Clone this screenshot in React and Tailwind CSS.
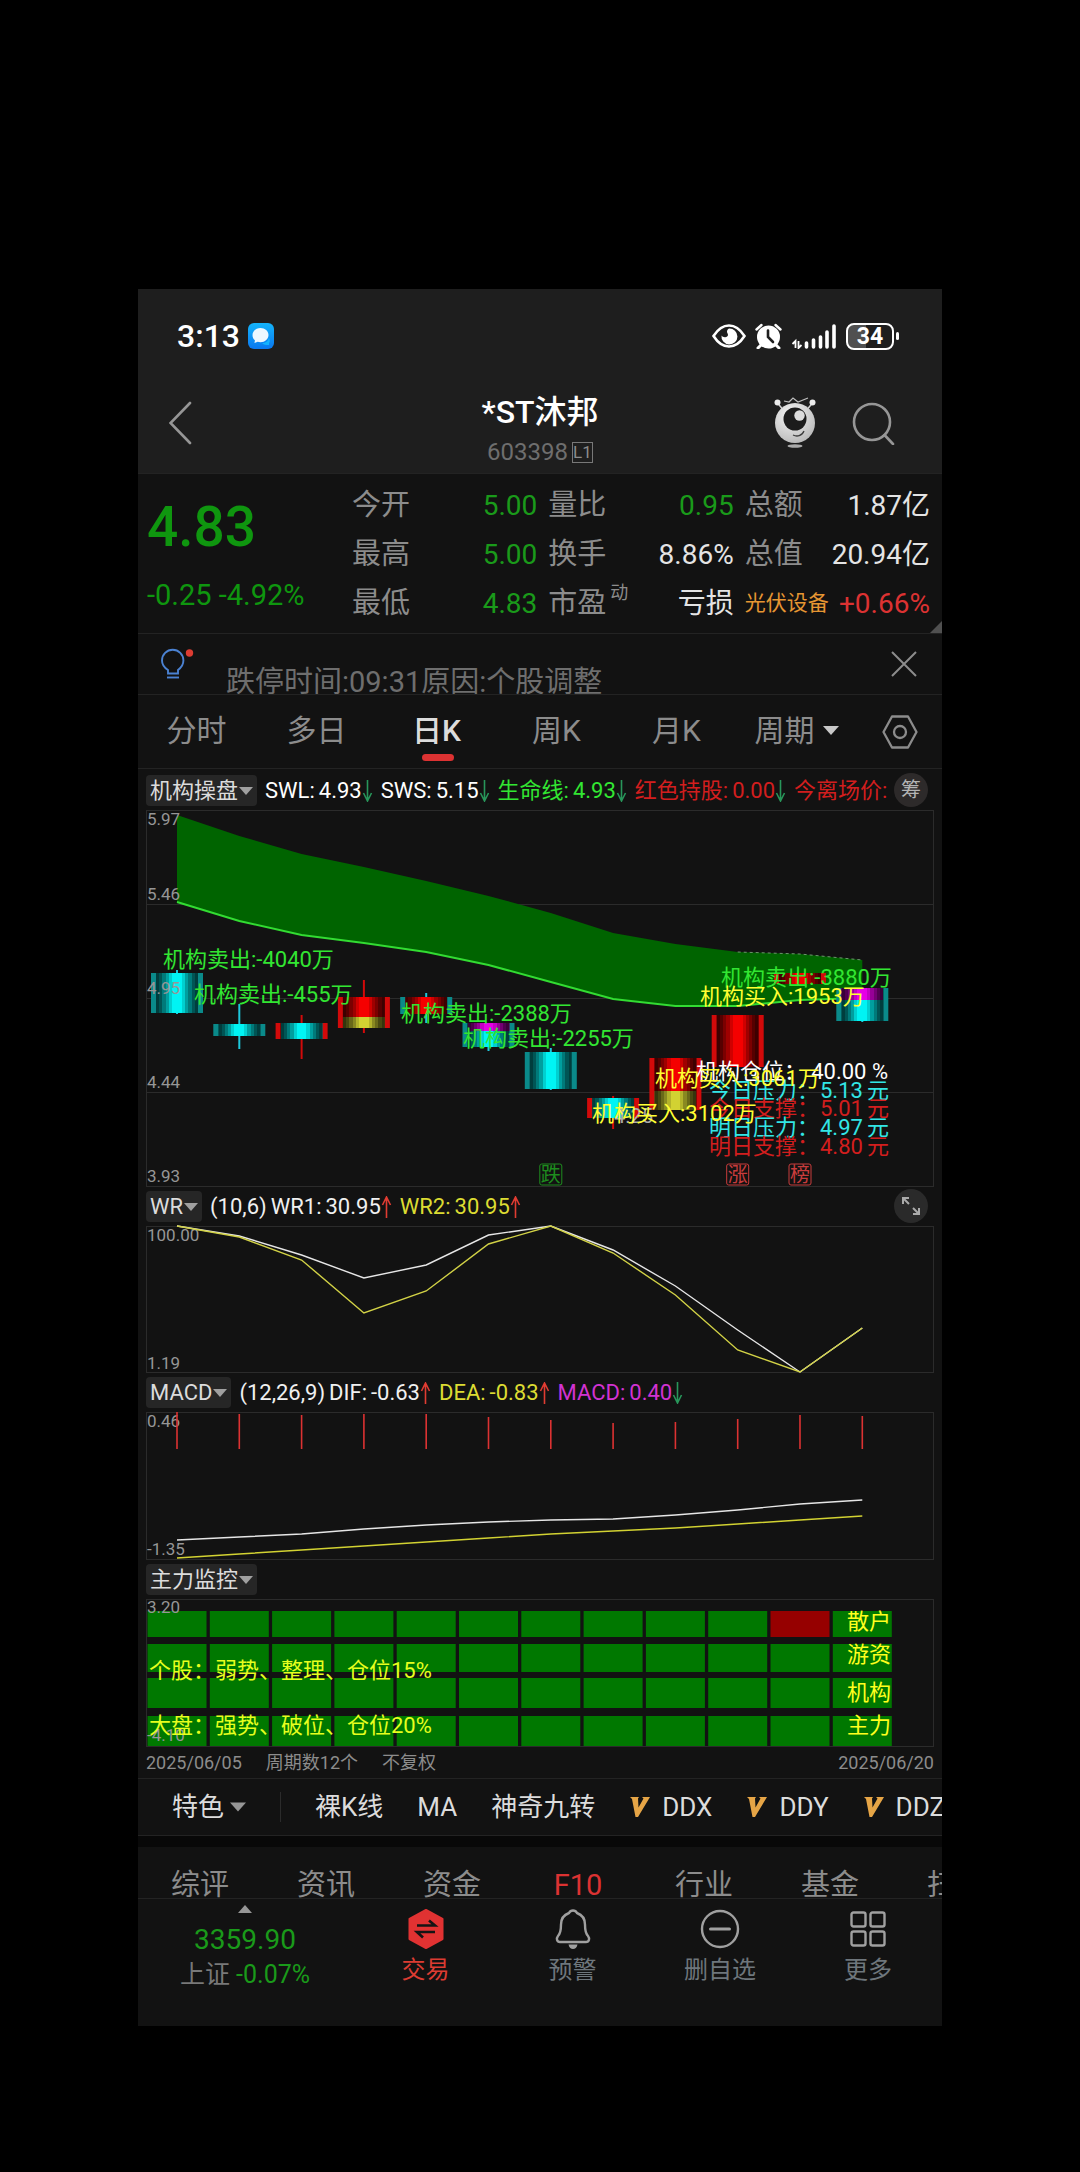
const START = 31;
const STEP = 62.3;
const cx = (i) => START + STEP * i;
const toPoints = (ys) => ys.map((y, i) => `${cx(i)},${y}`).join(' ');

const CYAN = '#00f4f4';
const RED = '#f50000';
const YELLOW = '#d2d232';
const MAGENTA = '#e600e6';
const TEAL = '#0a8a8a';
const DARK_RED = '#d20a0a';

const quoteRows = [
  [
    { label: '今开', value: '5.00', color: 'text-[#1a9a1a]' },
    { label: '量比', value: '0.95', color: 'text-[#1a9a1a]' },
    { label: '总额', value: '1.87亿', color: 'text-[#e4e4e4]' },
  ],
  [
    { label: '最高', value: '5.00', color: 'text-[#1a9a1a]' },
    { label: '换手', value: '8.86%', color: 'text-[#e4e4e4]' },
    { label: '总值', value: '20.94亿', color: 'text-[#e4e4e4]' },
  ],
  [
    { label: '最低', value: '4.83', color: 'text-[#1a9a1a]' },
    { label: '市盈', sup: '动', value: '亏损', color: 'text-[#e4e4e4]' },
    { label: '光伏设备', sector: true, value: '+0.66%', color: 'text-[#dc3232]' },
  ],
];

const bandTop = [5, 26, 44, 57, 71, 86, 103, 123, 134, 142, 144, 150];
const bandBottom = [92, 111, 125, 133, 142, 155, 172, 189, 196, 196, 190, 188];

const candles = [
  { side: TEAL, wick: [160, 204], parts: [[163, 203, CYAN]] },
  { side: TEAL, wick: [194, 239], parts: [[214, 226, CYAN]] },
  { side: DARK_RED, wick: [205, 249], parts: [[213, 229, CYAN]] },
  { side: DARK_RED, wick: [170, 223], parts: [[187, 207, RED], [207, 218, YELLOW]] },
  { side: TEAL, wick: [183, 213], parts: [[187, 204, RED]] },
  { side: TEAL, wick: [213, 241], parts: [[213, 221, MAGENTA], [221, 237, CYAN]] },
  { side: TEAL, wick: [238, 280], parts: [[242, 279, CYAN]] },
  { side: DARK_RED, wick: [286, 319], parts: [[288, 308, CYAN]] },
  { side: DARK_RED, wick: [248, 300], parts: [[248, 281, RED], [281, 300, YELLOW]] },
  { side: DARK_RED, wick: [205, 257], parts: [[205, 257, RED]] },
  { side: DARK_RED, wick: [163, 174], parts: [[163, 174, RED]] },
  { side: TEAL, wick: [178, 212], parts: [[178, 190, MAGENTA], [190, 211, CYAN]] },
];

// brightness of the vertical stripes in a candle body, left to right
const shades = [0.25, 0.35, 0.5, 0.65, 0.85, 1, 1, 1, 0.85, 0.65, 0.5, 0.35, 0.25];

const flows = [
  { x: 17, y: 157, text: '机构卖出:-4040万', color: '#32e632' },
  { x: 48, y: 192, text: '机构卖出:-455万', color: '#32e632' },
  { x: 255, y: 211, text: '机构卖出:-2388万', color: '#32e632' },
  { x: 317, y: 236, text: '机构卖出:-2255万', color: '#32e632' },
  { x: 575, y: 175, text: '机构卖出:-3880万', color: '#32e632' },
  { x: 554, y: 194, text: '机构买入:1953万', color: '#ffff32' },
];

const levels = [
  { y: 288, label: '今日压力：', value: '5.13', color: '#32e6e6' },
  { y: 306, label: '今日支撑：', value: '5.01', color: '#d21e1e' },
  { y: 325, label: '明日压力：', value: '4.97', color: '#32e6e6' },
  { y: 344, label: '明日支撑：', value: '4.80', color: '#d21e1e' },
];

const marks = [
  { i: 6, text: '跌', color: '#1e8c1e' },
  { i: 9, text: '涨', color: '#c83c3c' },
  { i: 10, text: '榜', color: '#c83c3c' },
];

const wr1 = [0, 10, 29, 52, 39, 9, 0, 24, 60, 104, 146, 102];
const wr2 = [0, 11, 34, 87, 65, 18, 0, 27, 69, 124, 146, 102];

const macdBars = [0, 2, 3, 2, 2, 5, 8, 11, 10, 7, 3, 4];
const dif = [128, 125, 122, 117, 113, 110, 108, 107, 103, 98, 92, 88];
const dea = [146, 142, 138, 134, 130, 126, 122, 119, 116, 112, 108, 104];

const monitorRows = [
  { y: 12, h: 26, label: '散户', base: 30 },
  { y: 45, h: 28, label: '游资', base: 63 },
  { y: 79, h: 30, label: '机构', base: 101 },
  { y: 117, h: 30, label: '主力', base: 134 },
];

function Caret({ className = '' }) {
  return (
    <svg viewBox="0 0 16 9" className={className}>
      <path d="M0 0h16L8 9z" fill="currentColor" />
    </svg>
  );
}

function Trend({ up }) {
  return (
    <svg
      viewBox="0 0 11 22"
      className={`h-[22px] w-[11px] shrink-0 ${up ? 'text-[#e03c32]' : 'rotate-180 text-[#28965a]'}`}
      fill="none"
      stroke="currentColor"
      strokeWidth="1.6"
    >
      <path d="M5.5 22V1M1.5 9L5.5 1l4 8" />
    </svg>
  );
}

function IndicatorRow({ name, children }) {
  return (
    <div className="flex h-[39px] items-center gap-2 text-[22px] leading-none whitespace-nowrap">
      <button className="flex h-[31px] shrink-0 items-center gap-px rounded-sm bg-[#262626] px-1 text-[#dcdcdc]">
        {name}
        <Caret className="h-2 w-[14px] text-[#a0a0a0]" />
      </button>
      {children}
    </div>
  );
}

function Reading({ label, value, up, color = 'text-[#f0f0f0]' }) {
  return (
    <span className={`flex items-center ${color}`}>
      {label}:<span className="ml-1">{value}</span>
      <Trend up={up} />
    </span>
  );
}

function Frame({ height }) {
  return <rect x="0.5" y="0.5" width="787" height={height - 1} fill="none" stroke="#2b2b2b" />;
}

function StatusBar() {
  return (
    <div className="flex h-[94px] items-center pl-[39px] pr-[43px] text-white">
      <span className="text-[32px] font-medium leading-none">3:13</span>
      <svg viewBox="0 0 26 26" className="ml-2 size-[26px]">
        <defs>
          <linearGradient id="chat" x1="0" y1="0" x2="0" y2="1">
            <stop offset="0" stopColor="#14b4fa" />
            <stop offset="1" stopColor="#0a78f0" />
          </linearGradient>
        </defs>
        <rect width="26" height="26" rx="6" fill="url(#chat)" />
        <path d="M14 20c4 0 6-2 7-5 1 2 1 4 0 5v2c-3 0-5 0-7-2z" fill="#14b4ff" />
        <path d="M12.500 5c4.500 0 8 3 8 7s-3.500 7.200-8 7.200c-1 0-2-.1-2.800-.4L6.500 20l.4-2.800C5.200 16 4.500 14 4.500 12c0-4 3.500-7 8-7z" fill="#eef8ff" />
      </svg>
      <div className="ml-auto flex items-center gap-[9px]">
        <svg viewBox="0 0 34 24" className="h-6 w-[34px]" fill="none">
          <path d="M1.500 12C6 5 11 1.500 17 1.500S28 5 32.500 12C28 19 23 22.500 17 22.500S6 19 1.500 12z" stroke="#fff" strokeWidth="2.600" />
          <path d="M17 4.500a8 8 0 1 1-7.500 7c1 1.500 3 2 4.500 1.500 2.500-.8 2.300-2.500 1.300-4-.8-1.700 0-3.600 1.700-4.500z" fill="#fff" />
        </svg>
        <svg viewBox="0 0 27 26" className="h-[26px] w-[27px]" fill="none">
          <circle cx="13.500" cy="14" r="11.500" fill="#fff" />
          <path d="M1.500 6.500l5-4.500M25.500 6.500l-5-4.500" stroke="#fff" strokeWidth="2.400" strokeLinecap="round" />
          <path d="M6 22l-3 3M21 22l3 3" stroke="#fff" strokeWidth="3" strokeLinecap="round" />
          <path d="M13 7.500V14l5 5" stroke="#1e1e1e" strokeWidth="2.600" strokeLinecap="round" />
        </svg>
        <svg viewBox="0 0 46 26" className="h-[26px] w-[46px]" stroke="#fff" fill="none">
          <path d="M4.500 25v-7l-3 3M7.500 18v7l3-3" strokeWidth="1.800" />
          <path d="M15.500 20v4M22.500 17v7M29.500 14v10M36 9v15M43 3v21" strokeWidth="3.600" strokeLinecap="round" />
        </svg>
        <div className="flex items-center gap-[2px]">
          <span className="flex h-[27px] w-12 items-center justify-center rounded-lg border-2 border-white bg-linear-to-r from-[#505050] from-40% to-transparent to-40% text-[23px] font-bold leading-none">
            34
          </span>
          <span className="h-2 w-[3px] rounded-full bg-white" />
        </div>
      </div>
    </div>
  );
}

function TitleBar() {
  return (
    <div className="grid h-[90px] grid-cols-3 items-start pl-[31px] pr-[47px]">
      <button aria-label="返回" className="mt-[18px] w-6 text-[#969696]">
        <svg viewBox="0 0 24 44" className="h-11 w-6" fill="none" stroke="currentColor" strokeWidth="2.600" strokeLinecap="round">
          <path d="M21 2L1.500 22 21 42" />
        </svg>
      </button>
      <div className="flex flex-col items-center gap-1 pt-[11px] pl-4 whitespace-nowrap">
        <h1 className="text-[32px] font-medium leading-9 text-white">*ST沐邦</h1>
        <div className="flex items-center gap-1 text-2xl leading-9 text-[#6e6e6e]">
          603398
          <span className="flex h-[21px] w-[21px] items-center justify-center border border-[#787878] text-[17px] leading-none text-[#8c8c8c]">L1</span>
        </div>
      </div>
      <div className="flex items-center justify-end gap-9 pt-[14px]">
        <button aria-label="助手">
          <svg viewBox="0 0 42 52" className="h-[52px] w-[42px]" fill="none">
            <defs>
              <radialGradient id="ball" cx="0.4" cy="0.3" r="0.8">
                <stop offset="0" stopColor="#f5f5f5" />
                <stop offset="1" stopColor="#b4b4b4" />
              </radialGradient>
            </defs>
            <path d="M10 4l5 1 4-4 5 4 10-4" stroke="#bebebe" strokeWidth="1.200" />
            <path d="M3.500 6l5 6M38.500 6l-5 6" stroke="#d2d2d2" strokeWidth="1.500" />
            <circle cx="3.500" cy="5.500" r="3" fill="#ebebeb" />
            <circle cx="38.500" cy="5.500" r="3" fill="#ebebeb" />
            <circle cx="21" cy="26" r="20" fill="url(#ball)" />
            <circle cx="21" cy="22" r="11.500" fill="#1c1c1c" />
            <circle cx="25.500" cy="18.500" r="5.200" fill="#dcdcdc" />
            <path d="M19 38c4 2 9 1 11-4" stroke="#3c3c3c" strokeWidth="1.300" />
            <ellipse cx="21" cy="49" rx="7.500" ry="1.800" fill="#aaa" />
          </svg>
        </button>
        <button aria-label="搜索" className="text-[#969696]">
          <svg viewBox="0 0 43 43" className="size-[43px]" fill="none" stroke="currentColor" strokeWidth="2.600" strokeLinecap="round">
            <circle cx="20" cy="20" r="18" />
            <path d="M32.500 33L41 42" />
          </svg>
        </button>
      </div>
    </div>
  );
}

function Quote() {
  return (
    <section className="relative flex h-[161px] border-y border-[#232323] pl-[9px] pr-3">
      <div className="flex w-[205px] shrink-0 flex-col pt-[23px] text-[#0f960f]">
        <strong className="text-[55px] font-medium leading-[60px]">4.83</strong>
        <span className="pt-[18px] text-[29px] leading-10">-0.25 -4.92%</span>
      </div>
      <div className="flex flex-1 flex-col pt-[7px]">
        {quoteRows.map((row, i) => (
          <div key={i} className="grid h-[49px] grid-cols-3 gap-[11px] text-[28px] leading-[49px]">
            {row.map((cell) => (
              <div key={cell.label} className="flex justify-between whitespace-nowrap">
                {cell.sector ? (
                  <a href="#sector" className="text-[21px] text-[#e69632]">{cell.label}</a>
                ) : (
                  <span className="flex text-[29px] text-[#8c8c8c]">
                    {cell.label}
                    {cell.sup && <sup className="top-0 ml-1 text-lg leading-7">{cell.sup}</sup>}
                  </span>
                )}
                <span className={cell.color}>{cell.value}</span>
              </div>
            ))}
          </div>
        ))}
      </div>
      <svg viewBox="0 0 12 12" className="absolute right-0 bottom-0 size-3">
        <path d="M12 0v12H0z" fill="#505050" />
      </svg>
    </section>
  );
}

function Notice() {
  return (
    <section className="flex h-[61px] items-start overflow-hidden border-b border-[#232323] pl-[23px] pr-[25px]">
      <svg viewBox="0 0 34 32" className="mt-[14px] h-8 w-[34px] shrink-0" fill="none">
        <path d="M7 22C3 19.500 1 16.500 1 12.500a10.700 10.700 0 0 1 21.400 0c0 4-2 7-5.400 9.500v3.500H7z" stroke="#4b82d2" strokeWidth="1.900" />
        <path d="M6 29.500h12" stroke="#4b82d2" strokeWidth="1.900" />
        <circle cx="28.500" cy="5" r="3.700" fill="#dc3c32" />
      </svg>
      <p className="ml-[31px] flex-1 pt-[30px] text-[29px] leading-9 whitespace-nowrap text-[#6e6e6e]">
        跌停时间:09:31原因:个股调整
      </p>
      <button aria-label="关闭" className="mt-[17px] text-[#8c8c8c]">
        <svg viewBox="0 0 26 26" className="size-[26px]" stroke="currentColor" strokeWidth="2">
          <path d="M1 1l24 24M25 1L1 25" />
        </svg>
      </button>
    </section>
  );
}

function PeriodTabs() {
  return (
    <nav className="grid h-[74px] grid-cols-[repeat(6,10fr)_7fr] border-b border-[#232323] text-[30px] text-[#8c8c8c]">
      {['分时', '多日', '日K', '周K', '月K'].map((name) => (
        <button key={name} className={`relative pr-[3px] pb-[2px] ${name === '日K' ? 'font-medium text-[#dcdcdc]' : ''}`}>
          {name}
          {name === '日K' && (
            <span className="absolute inset-x-0 bottom-[7px] mx-auto h-[7px] w-8 rounded-full bg-[#dc3232]" />
          )}
        </button>
      ))}
      <button className="flex items-center justify-center gap-2 pr-[3px] pb-[2px] whitespace-nowrap">
        周期
        <Caret className="h-[9px] w-4 text-[#c8c8c8]" />
      </button>
      <button aria-label="设置" className="flex items-center justify-center">
        <svg viewBox="0 0 36 34" className="h-[34px] w-9" fill="none" stroke="currentColor" strokeWidth="2.300" strokeLinejoin="round">
          <path d="M10 1.500h16L34.500 17 26 32.500H10L1.500 17z" />
          <circle cx="18" cy="17" r="6" />
        </svg>
      </button>
    </nav>
  );
}

function Candle({ i, side, wick, parts }) {
  const x = cx(i);
  const top = parts[0][0];
  const bottom = parts[parts.length - 1][1];
  const stripe = 42 / shades.length;
  return (
    <g>
      <path d={`M${x} ${wick[0]}V${wick[1]}`} stroke={side === TEAL ? '#1ec8dc' : side} strokeWidth="2" />
      <rect x={x - 26} y={top} width="52" height={bottom - top} fill={side} />
      <rect x={x - 21} y={top} width="42" height={bottom - top} fill="#000" />
      {parts.map(([y1, y2, color]) =>
        shades.map((shade, n) => (
          <rect
            key={`${y1}-${n}`}
            x={x - 21 + n * stripe}
            y={y1}
            width={stripe}
            height={y2 - y1}
            fill={color}
            fillOpacity={shade}
            shapeRendering="crispEdges"
          />
        ))
      )}
    </g>
  );
}

function MainChart() {
  const area = `${toPoints(bandTop)} ${bandBottom.map((y, i) => `${cx(i)},${y}`).reverse().join(' ')}`;
  return (
    <svg viewBox="0 0 788 377" className="block w-full" fontSize="22">
      <Frame height={377} />
      <path d="M0 94.500h788M0 188.500h788M0 282.500h788" stroke="#2b2b2b" />
      <polygon points={area} fill="#006400" />
      <polyline points={toPoints(bandBottom)} fill="none" stroke="#32dc32" strokeWidth="2" />
      <path d={`M${cx(9)} 142L${cx(10)} 144L${cx(11)} 150`} fill="none" stroke="#6e966e" strokeDasharray="3 3" />
      {candles.map((c, i) => (
        <Candle key={i} i={i} {...c} />
      ))}
      <g fill="#969696" fontSize="17">
        <text x="1" y="15">5.97</text>
        <text x="1" y="90">5.46</text>
        <text x="1" y="184">4.95</text>
        <text x="1" y="278">4.44</text>
        <text x="1" y="372">3.93</text>
      </g>
      <text x="468" y="313" fill="#aaa" fontSize="20">4.25</text>
      {flows.map((f) => (
        <text key={f.text} x={f.x} y={f.y} fill={f.color}>{f.text}</text>
      ))}
      <g fill="#fff">
        <text x="550" y="269">机构仓位：</text>
        <text x="742" y="269" textAnchor="end">40.00 %</text>
      </g>
      {levels.map((l) => (
        <g key={l.label} fill={l.color}>
          <text x="563" y={l.y}>{l.label}</text>
          <text x="674" y={l.y}>{l.value}</text>
          <text x="721" y={l.y}>元</text>
        </g>
      ))}
      <g fill="#ffff32">
        <text x="509" y="276">机构买入:3061万</text>
        <text x="446" y="311">机构买入:3102万</text>
      </g>
      {marks.map((m) => (
        <g key={m.text}>
          <rect x={cx(m.i) - 11} y="354" width="22" height="21" rx="2" fill="none" stroke={m.color} />
          <text x={cx(m.i)} y="372" textAnchor="middle" fontSize="20" fill={m.color}>{m.text}</text>
        </g>
      ))}
    </svg>
  );
}

function WrChart() {
  return (
    <svg viewBox="0 0 788 147" className="block w-full overflow-visible" fontSize="17">
      <Frame height={147} />
      <text x="1" y="15" fill="#969696">100.00</text>
      <text x="1" y="143" fill="#969696">1.19</text>
      <g fill="none" strokeWidth="1.400">
        <polyline points={toPoints(wr1)} stroke="#e6e6e6" />
        <polyline points={toPoints(wr2)} stroke="#d2d246" />
      </g>
    </svg>
  );
}

function MacdChart() {
  return (
    <svg viewBox="0 0 788 148" className="block w-full" fontSize="17">
      <Frame height={148} />
      <text x="1" y="15" fill="#969696">0.46</text>
      <text x="1" y="143" fill="#969696">-1.35</text>
      {macdBars.map((y, i) => (
        <path key={i} d={`M${cx(i)} ${y}V37`} stroke="#dc3232" strokeWidth="1.600" />
      ))}
      <g fill="none" strokeWidth="1.400">
        <polyline points={toPoints(dif)} stroke="#e6e6e6" />
        <polyline points={toPoints(dea)} stroke="#d2d232" />
      </g>
    </svg>
  );
}

function MonitorChart() {
  return (
    <svg viewBox="0 0 788 148" className="block w-full" fontSize="22">
      <Frame height={148} />
      {monitorRows.map((row, r) => (
        <g key={row.label}>
          {candles.map((_, i) => (
            <rect
              key={i}
              x={cx(i) - 29.5}
              y={row.y}
              width="59"
              height={row.h}
              fill={r === 0 && i === 10 ? '#960000' : '#007800'}
            />
          ))}
          <text x="745" y={row.base} textAnchor="end" fill="#ffff1e">{row.label}</text>
        </g>
      ))}
      <g fill="#969696" fontSize="17">
        <text x="1" y="14">3.20</text>
        <text x="1" y="142">-4.10</text>
      </g>
      <g fill="#e6ff1e">
        <text x="3" y="79">个股：弱势、整理、仓位15%</text>
        <text x="3" y="134">大盘：强势、破位、仓位20%</text>
      </g>
    </svg>
  );
}

function Features() {
  return (
    <div className="flex h-[58px] items-center overflow-hidden border-y border-[#232323] pl-[34px] text-[26px] whitespace-nowrap text-[#dcdcdc]">
      <button className="flex shrink-0 items-center gap-[6px]">
        特色
        <Caret className="h-[10px] w-4 text-[#969696]" />
      </button>
      <span className="mx-[34px] h-[30px] w-px shrink-0 bg-[#2b2b2b]" />
      <div className="flex gap-[34px]">
        <button>裸K线</button>
        <button>MA</button>
        <button>神奇九转</button>
        {['DDX', 'DDY', 'DDZ'].map((name) => (
          <button key={name} className="flex items-center gap-3">
            <svg viewBox="0 0 21 20" className="h-5 w-[21px]">
              <path d="M1 0h9l-1 1.500.5 9L14.500 1.500 13 0h8L9 20H6.500L3 2z" fill="#e6a546" />
            </svg>
            {name}
          </button>
        ))}
      </div>
    </div>
  );
}

function InfoTabs() {
  return (
    <nav className="flex h-[51px] items-start gap-[68px] overflow-hidden pl-[33px] pt-5 text-[29px] leading-9 whitespace-nowrap text-[#8c8c8c]">
      {['综评', '资讯', '资金', 'F10', '行业', '基金', '扫雷'].map((name) => (
        <button key={name} className={`w-[58px] shrink-0 ${name === 'F10' ? 'text-[#dc3232]' : ''}`}>
          {name}
        </button>
      ))}
    </nav>
  );
}

function BottomBar() {
  return (
    <footer className="grid h-[128px] grid-cols-[214fr_147fr_147fr_148fr_148fr] items-start border-t border-[#232323] text-2xl leading-[30px] text-[#6e767c]">
      <button className="flex flex-col items-center pt-[6px] whitespace-nowrap">
        <Caret className="h-2 w-[14px] rotate-180 text-[#969696]" />
        <span className="pt-[9px] text-[28px] leading-9 text-[#1a9a1a]">3359.90</span>
        <span className="pt-[2px] text-[25px] text-[#787878]">
          上证 <span className="text-[#1a9a1a]">-0.07%</span>
        </span>
      </button>
      <button className="flex flex-col items-center gap-[6px] pt-[10px] text-[#dc3c32]">
        <svg viewBox="0 0 36 40" className="h-10 w-9" fill="none">
          <path d="M18 1l16.500 9v20L18 39 1.500 30V10z" fill="#e13232" stroke="#e13232" strokeWidth="2" strokeLinejoin="round" />
          <path d="M9 16.500h18l-6-5M27 23H9l6 5.500" stroke="#141414" strokeWidth="2.600" />
        </svg>
        交易
      </button>
      <button className="flex flex-col items-center gap-[6px] pt-[10px]">
        <svg viewBox="0 0 36 40" className="h-10 w-9" fill="none">
          <path d="M18 1.500c-2.500 0-3.500 1.500-4 2.500C8.500 6 6 10 6 15.500c0 6-.5 9-3 11.500-2 2.500-1.200 6 2 6h26c3.200 0 4-3.500 2-6-2.500-2.500-3-5.500-3-11.500C30 10 27.500 6 22 4c-.5-1-1.500-2.500-4-2.500z" stroke="#a0a0a0" strokeWidth="2.400" />
          <path d="M13.500 35.500h9c-.5 3-2.500 4.500-4.500 4.500s-4-1.500-4.500-4.500z" fill="#a0a0a0" />
        </svg>
        预警
      </button>
      <button className="flex flex-col items-center gap-[6px] pt-[10px]">
        <svg viewBox="0 0 40 40" className="size-10" fill="none" stroke="#a0a0a0">
          <circle cx="20" cy="20" r="18" strokeWidth="2.400" />
          <path d="M10.500 20h19" strokeWidth="3" strokeLinecap="round" />
        </svg>
        删自选
      </button>
      <button className="flex flex-col items-center gap-[6px] pt-[10px]">
        <svg viewBox="0 0 36 40" className="h-10 w-9" fill="none" stroke="#a0a0a0" strokeWidth="2.400">
          <rect x="1.500" y="3.500" width="14" height="14" rx="2" />
          <rect x="20.500" y="3.500" width="14" height="14" rx="2" />
          <rect x="1.500" y="22.500" width="14" height="14" rx="2" />
          <rect x="20.500" y="22.500" width="14" height="14" rx="2" />
        </svg>
        更多
      </button>
    </footer>
  );
}

export default function App() {
  return (
    <div lang="zh-CN" className="min-h-screen bg-black px-[138px] pt-[289px] pb-[146px] font-['Roboto','Noto_Sans_CJK_SC',sans-serif]">
      <main className="overflow-hidden bg-[#121212]">
        <header className="bg-[#1e1e1e]">
          <StatusBar />
          <TitleBar />
        </header>
        <Quote />
        <Notice />
        <PeriodTabs />
        <div className="px-2">
          <div className="relative pt-[2px]">
            <IndicatorRow name="机构操盘">
              <div className="flex flex-1 gap-2">
                <Reading label="SWL" value="4.93" color="text-white" />
                <Reading label="SWS" value="5.15" color="text-white" />
                <Reading label="生命线" value="4.93" color="text-[#32e632]" />
                <Reading label="红色持股" value="0.00" color="text-[#d21e1e]" />
                <span className="flex items-center text-[#d21e1e]">今离场价:</span>
              </div>
            </IndicatorRow>
            <button className="absolute top-1 right-[6px] size-[34px] rounded-full bg-[#2d2a2a] text-xl leading-none text-[#b4b4b4]">
              筹
            </button>
          </div>
          <MainChart />
          <div className="relative">
            <IndicatorRow name="WR">
              <span className="-mr-1 text-[#f0f0f0]">(10,6)</span>
              <Reading label="WR1" value="30.95" up />
              <Reading label="WR2" value="30.95" up color="text-[#dcdc32]" />
            </IndicatorRow>
            <button aria-label="展开" className="absolute top-[2px] right-[6px] flex size-[34px] items-center justify-center rounded-full bg-[#2a2a2a]">
              <svg viewBox="0 0 20 20" className="size-5" fill="none" stroke="#aaa" strokeWidth="2">
                <path d="M2 8V2h6M2 2l6 6M18 12v6h-6M18 18l-6-6" />
              </svg>
            </button>
          </div>
          <WrChart />
          <IndicatorRow name="MACD">
            <span className="-mr-1 text-[#f0f0f0]">(12,26,9)</span>
            <Reading label="DIF" value="-0.63" up />
            <Reading label="DEA" value="-0.83" up color="text-[#dcdc32]" />
            <Reading label="MACD" value="0.40" color="text-[#d232d2]" />
          </IndicatorRow>
          <MacdChart />
          <IndicatorRow name="主力监控" />
          <MonitorChart />
          <div className="flex h-[31px] items-center gap-6 text-lg leading-none text-[#8c8c8c]">
            <span>2025/06/05</span>
            <span>周期数12个</span>
            <span>不复权</span>
            <span className="ml-auto">2025/06/20</span>
          </div>
        </div>
        <Features />
        <div className="h-[11px] bg-[#080808]" />
        <InfoTabs />
        <BottomBar />
      </main>
    </div>
  );
}
